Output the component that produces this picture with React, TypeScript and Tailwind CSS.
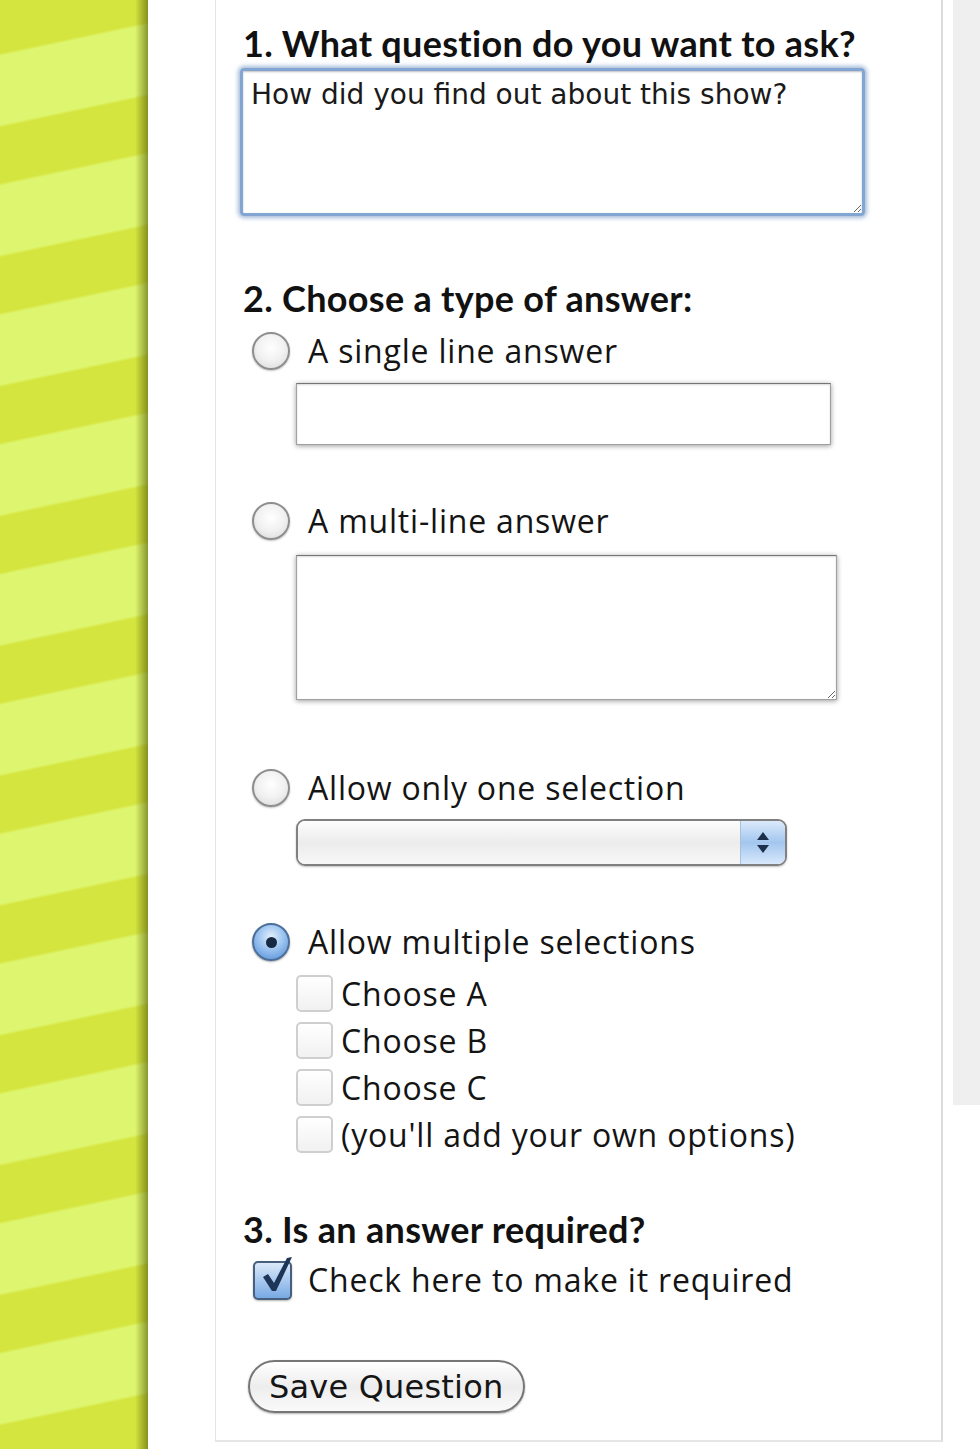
import React from 'react';

const head = "font-['Lato',_'Noto_Sans',_sans-serif] text-[36px] font-bold leading-[40px] tracking-[0.3px] text-[#111]";
const label = "font-['Open_Sans',_'Noto_Sans',_sans-serif] text-[32px] font-medium leading-[40px] tracking-[0.8px] text-[#141414]";
const mono = "font-['DejaVu_Sans',_'Liberation_Sans',_sans-serif]";

function Radio({ checked = false }: { checked?: boolean }) {
  if (checked) {
    return (
      <span className="flex h-[38px] w-[38px] shrink-0 items-center justify-center rounded-full border-2 border-[#4d6f99] bg-[radial-gradient(circle_at_50%_35%,#e4f0fd_0%,#9cc4f0_45%,#4d8ad6_100%)] shadow-[0_1px_2px_rgba(0,0,0,0.35)]">
        <span className="h-[11px] w-[11px] rounded-full bg-[#172a44]" />
      </span>
    );
  }
  return <span className="block h-[38px] w-[38px] shrink-0 rounded-full border-2 border-[#8e8e8e] bg-[radial-gradient(circle_at_50%_40%,#ffffff_0%,#f1f1f1_50%,#d6d6d6_100%)] shadow-[0_1px_2px_rgba(0,0,0,0.25)]" />;
}

function RadioRow({ text, checked }: { text: string; checked?: boolean }) {
  return (
    <div className="ml-[9px] flex h-[40px] items-center gap-[18px]">
      <Radio checked={checked} />
      <span className={label}>{text}</span>
    </div>
  );
}

function Box() {
  return <span className="block h-[37px] w-[37px] shrink-0 rounded-[5px] border-2 border-[#cfcfcf] bg-gradient-to-b from-white to-[#f1f1f1]" />;
}

function Option({ text }: { text: string }) {
  return (
    <div className="ml-[53px] flex h-[47px] items-center gap-[8px]">
      <Box />
      <span className={label}>{text}</span>
    </div>
  );
}

export default function App() {
  return (
    <div className="flex h-[1449px] w-[980px] overflow-hidden bg-white">
      <div className="flex w-[148px] shrink-0 bg-[repeating-linear-gradient(168deg,#d5e53f_0px,#d5e53f_52px,#def66f_55px,#def66f_122px,#d5e53f_125px,#d5e53f_127px)]">
        <div className="flex-1" />
        <div className="w-[13px] bg-gradient-to-r from-transparent to-[rgba(90,100,10,0.65)]" />
      </div>
      <div className="w-[67px] shrink-0" />

      <div className="flex h-[1442px] w-[728px] shrink-0 flex-col border-b-2 border-l border-r-2 border-b-[#e6e6e6] border-l-[#e4e4e4] border-r-[#dcdcdc] pl-[27px] pt-[23px]">
        <h1 className={head}>1. What question do you want to ask?</h1>
        <textarea
          defaultValue="How did you find out about this show?"
          className={`${mono} ml-[-3px] mt-[5px] h-[148px] w-[625px] rounded-[4px] border-[3px] border-[#83a5d2] px-[8px] pt-[7px] text-[28px] leading-[34px] text-[#1a1a1a] shadow-[0_0_4px_2px_rgba(90,130,185,0.55),inset_0_1px_2px_rgba(0,0,0,0.25)] outline-none`}
        />

        <h2 className={`${head} mt-[62px]`}>2. Choose a type of answer:</h2>
        <div className="mt-[13px]">
          <RadioRow text="A single line answer" />
        </div>
        <input
          type="text"
          className="ml-[53px] mt-[12px] h-[62px] w-[535px] border border-[#a0a0a0] border-t-[#757575] bg-white shadow-[0_1px_5px_rgba(0,0,0,0.4),inset_0_1px_2px_rgba(0,0,0,0.15)] outline-none"
        />

        <div className="mt-[56px]">
          <RadioRow text="A multi-line answer" />
        </div>
        <textarea className="ml-[53px] mt-[14px] h-[145px] w-[541px] border border-[#a0a0a0] border-t-[#757575] bg-white shadow-[0_1px_5px_rgba(0,0,0,0.4),inset_0_1px_2px_rgba(0,0,0,0.15)] outline-none" />

        <div className="mt-[68px]">
          <RadioRow text="Allow only one selection" />
        </div>
        <div className="ml-[53px] mt-[11px] flex h-[47px] w-[491px] overflow-hidden rounded-[9px] border-2 border-[#808080] shadow-[0_1px_2px_rgba(0,0,0,0.25)]">
          <div className="flex-1 bg-gradient-to-b from-[#fdfdfd] via-[#ececec] to-[#f7f7f7]" />
          <div className="flex w-[45px] flex-col items-center justify-center gap-[5px] border-l border-[#a9bfdc] bg-gradient-to-b from-[#dceafa] via-[#a3c6ef] to-[#d8e8fb]">
            <svg width="12" height="8" viewBox="0 0 12 8"><path d="M6 0 L12 8 L0 8 Z" fill="#1d2f4a" /></svg>
            <svg width="12" height="8" viewBox="0 0 12 8"><path d="M0 0 L12 0 L6 8 Z" fill="#1d2f4a" /></svg>
          </div>
        </div>

        <div className="mt-[56px]">
          <RadioRow text="Allow multiple selections" checked />
        </div>
        <div className="mt-[8px] flex flex-col">
          <Option text="Choose A" />
          <Option text="Choose B" />
          <Option text="Choose C" />
          <Option text="(you'll add your own options)" />
        </div>

        <h3 className={`${head} mt-[51px]`}>3. Is an answer required?</h3>
        <div className="ml-[10px] mt-[11px] flex h-[40px] items-center gap-[16px]">
          <span className="relative block h-[39px] w-[39px] shrink-0 rounded-[5px] border-2 border-[#475f7c] bg-gradient-to-b from-[#dbe9f9] via-[#a9c9ef] to-[#78a9e3] shadow-[0_1px_2px_rgba(0,0,0,0.3)]">
            <svg className="absolute left-[5px] top-[-10px]" width="36" height="42" viewBox="0 0 36 42">
              <path d="M3 24 L8 21 L14 30 L27 5 L32 4 L16 38 L12 38 Z" fill="#1d3556" />
            </svg>
          </span>
          <span className={label}>Check here to make it required</span>
        </div>

        <button
          type="button"
          className={`${mono} ml-[5px] mt-[60px] flex h-[53px] w-[277px] items-center rounded-full border-2 border-[#767676] bg-gradient-to-b from-white via-[#ededed] to-[#fafafa] pl-[19px] text-[32px] leading-none tracking-[0.2px] text-[#151515] shadow-[0_1px_2px_rgba(0,0,0,0.3)]`}
        >
          Save Question
        </button>
      </div>

      <div className="ml-[10px] flex-1">
        <div className="h-[1105px] bg-[#efefef]" />
      </div>
    </div>
  );
}
